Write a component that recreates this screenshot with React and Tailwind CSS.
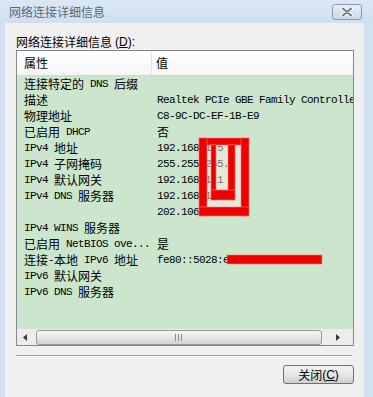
import React from "react";

const CJK = "font-['Noto_Sans_CJK_SC',sans-serif] text-[12px]";

function Mixed({ text }) {
  const runs = text.match(/[\u3000-\u303f\u4e00-\u9fff\uff00-\uffef]+|[^\u3000-\u303f\u4e00-\u9fff\uff00-\uffef]+/g) || [];
  return (
    <>
      {runs.map((r, i) =>
        /[\u3000-\u303f\u4e00-\u9fff\uff00-\uffef]/.test(r) ? (
          <span key={i} className="font-['Noto_Sans_CJK_SC',sans-serif] text-[12px]">{r}</span>
        ) : (
          <span key={i} className="font-['Liberation_Mono',monospace] text-[11px] tracking-[-0.6px] whitespace-pre">{r}</span>
        )
      )}
    </>
  );
}

const rows = [
  ["连接特定的 DNS 后缀", ""],
  ["描述", "Realtek PCIe GBE Family Controller"],
  ["物理地址", "C8-9C-DC-EF-1B-E9"],
  ["已启用 DHCP", "否"],
  ["IPv4 地址", "192.168.1.5"],
  ["IPv4 子网掩码", "255.255.255.0"],
  ["IPv4 默认网关", "192.168.1.1"],
  ["IPv4 DNS 服务器", "192.168.1.2"],
  ["", "202.106.196.115"],
  ["IPv4 WINS 服务器", ""],
  ["已启用 NetBIOS ove...", "是"],
  ["连接-本地 IPv6 地址", "fe80::5028:e4c1:9a2b"],
  ["IPv6 默认网关", ""],
  ["IPv6 DNS 服务器", ""],
];

export default function App() {
  return (
    <div className="relative w-[373px] h-[397px] overflow-hidden bg-[#d2e1f2] flex flex-col">
      {/* Title bar */}
      <div className="h-[23px] flex items-center bg-gradient-to-b from-[#dbe7f5] to-[#cfdff1] relative">
        <span className="ml-[9px] text-[12px] leading-[16px] text-[#5b6875] font-['Noto_Sans_CJK_SC',sans-serif]">
          网络连接详细信息
        </span>
        <div className="absolute left-[332px] top-[4px] w-[30px] h-[16px] rounded-[3px] border border-[#8d9bab] bg-gradient-to-b from-[#e6eef8] to-[#cbd8e8] flex items-center justify-center">
          <svg width="14" height="10" viewBox="0 0 14 10">
            <path d="M3 1.5 L11 8.5 M11 1.5 L3 8.5" stroke="#ffffff" strokeWidth="4" strokeLinecap="round" />
            <path d="M3 1.5 L11 8.5 M11 1.5 L3 8.5" stroke="#6f7a87" strokeWidth="2" strokeLinecap="round" />
          </svg>
        </div>
      </div>

      {/* Client area */}
      <div className="ml-[5px] w-[359px] flex-1 bg-[#f0f0f0] flex flex-col">
        <div className="mt-[11px] ml-[11px] h-[16px] leading-[16px] flex items-center text-black">
          <span className={CJK}>网络连接详细信息</span>
          <span className="ml-[3px] text-[12px] font-['Liberation_Sans',sans-serif]">
            (<span className="underline">D</span>):
          </span>
        </div>

        {/* List box */}
        <div className="ml-[11px] w-[338px] h-[296px] border border-[#828790] bg-[#cbe6cc] flex flex-col overflow-hidden">
          <div className="h-[25px] flex border-b border-[#d5d5d5] bg-gradient-to-b from-[#ffffff] to-[#f4f5f6]">
            <div className="w-[135px] border-r border-[#e2e3e5] flex items-center pl-[7px]">
              <span className={CJK}>属性</span>
            </div>
            <div className="flex-1 flex items-center pl-[4px]">
              <span className={CJK}>值</span>
            </div>
          </div>
          <div className="flex flex-col">
            {rows.map(([k, v], i) => (
              <div key={i} className="h-[16px] flex items-center text-black">
                <div className="w-[135px] pl-[7px] overflow-hidden whitespace-nowrap leading-[16px] flex items-center">
                  <Mixed text={k} />
                </div>
                <div className="flex-1 pl-[5px] overflow-hidden whitespace-nowrap leading-[16px] flex items-center">
                  <Mixed text={v} />
                </div>
              </div>
            ))}
          </div>
          <div className="flex-1" />
          {/* Horizontal scrollbar */}
          <div className="h-[16px] bg-[#ececec] flex items-center">
            <div className="w-[17px] h-full flex items-center justify-center">
              <svg width="5" height="7" viewBox="0 0 5 7"><path d="M4 0 L0 3.5 L4 7 Z" fill="#3a3a3a" /></svg>
            </div>
            <div className="ml-[2px] w-[286px] h-[15px] rounded-[3px] border border-[#979797] bg-gradient-to-b from-[#f6f6f6] via-[#e6e6e6] to-[#d2d2d2] flex items-center justify-center">
              <svg width="9" height="7" viewBox="0 0 9 7">
                <rect x="0" y="0" width="1" height="7" fill="#8a8a8a" />
                <rect x="3" y="0" width="1" height="7" fill="#8a8a8a" />
                <rect x="6" y="0" width="1" height="7" fill="#8a8a8a" />
              </svg>
            </div>
            <div className="flex-1 h-full flex items-center justify-center">
              <svg width="5" height="7" viewBox="0 0 5 7"><path d="M1 0 L5 3.5 L1 7 Z" fill="#3a3a3a" /></svg>
            </div>
          </div>
        </div>

        {/* Separator */}
        <div className="mt-[9px] ml-[11px] w-[336px] h-[1px] bg-[#a0a0a0]" />
        <div className="ml-[11px] w-[336px] h-[1px] bg-[#ffffff]" />

        {/* Button */}
        <div className="mt-[8px] ml-[278px] w-[71px] h-[19px] rounded-[3px] border border-[#707070] bg-gradient-to-b from-[#f3f3f3] via-[#e6e6e6] to-[#cfcfcf] flex items-center justify-center">
          <span className={CJK + " leading-[16px]"}>关闭</span>
          <span className="text-[12px] font-['Liberation_Sans',sans-serif] leading-[16px]">
            (<span className="underline">C</span>)
          </span>
        </div>
      </div>

      {/* Red annotation marks over the content */}
      <svg className="absolute left-0 top-0 pointer-events-none" width="373" height="397" viewBox="0 0 373 397">
        <rect x="199" y="138" width="50" height="78" fill="rgba(255,240,238,0.45)" />
        <g fill="#ee0000" stroke="rgba(255,120,120,0.6)" strokeWidth="1">
          <rect x="199" y="138" width="50" height="7" />
          <rect x="199" y="138" width="8" height="78" />
          <rect x="241" y="138" width="8" height="78" />
          <rect x="199" y="207" width="50" height="9" />
          <rect x="211" y="145" width="5" height="55" />
          <rect x="228" y="145" width="7" height="55" />
          <rect x="211" y="190" width="24" height="10" />
          <rect x="227" y="255" width="95" height="9" />
        </g>
      </svg>
    </div>
  );
}
